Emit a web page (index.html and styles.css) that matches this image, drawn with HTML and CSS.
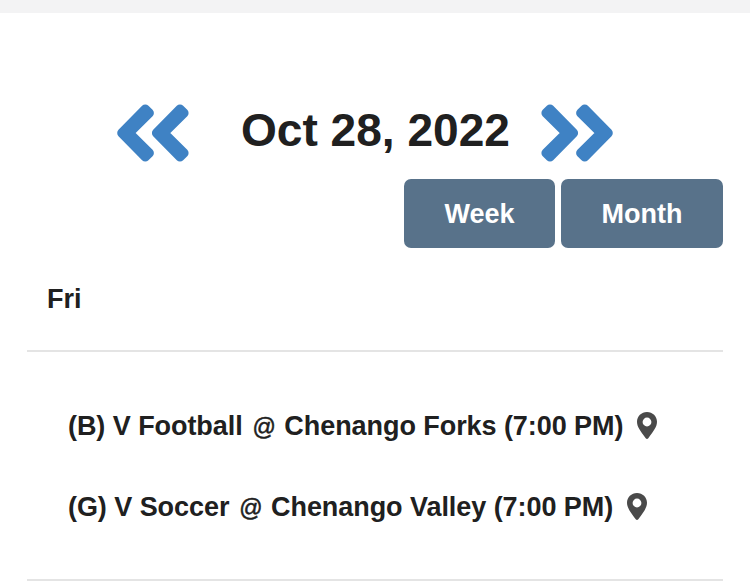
FILE: index.html
```html
<!DOCTYPE html>
<html lang="en">
<head>
<meta charset="utf-8">
<title>Schedule</title>
<link rel="stylesheet" href="styles.css">
</head>
<body>
<div class="topbar"></div>
<main class="calendar">
  <header class="heading">
    <svg class="chevrons" viewBox="0 0 72 58" aria-hidden="true"><path d="M4.700 29 28.300 5 32.400 9 12.200 29 32.400 49 28.300 53ZM39.400 29 63 5 67.100 9 46.900 29 67.100 49 63 53Z"/></svg>
    <h1 class="title"><svg class="line" width="269" height="56"><text x="0" y="43" textLength="269" lengthAdjust="spacingAndGlyphs">Oct 28, 2022</text></svg></h1>
    <svg class="chevrons" viewBox="0 0 72 58" aria-hidden="true"><path d="M32.600 29 9 5 4.900 9 25.100 29 4.900 49 9 53ZM67.300 29 43.700 5 39.600 9 59.800 29 39.600 49 43.700 53Z"/></svg>
  </header>
  <nav class="views">
    <button class="view week">Week</button>
    <button class="view month">Month</button>
  </nav>
  <h2 class="day">Fri</h2>
  <ul class="events">
    <li class="event"><span>(B) V Football <span class="at">@</span> Chenango Forks (7:00 PM)</span><svg class="pin" viewBox="0 0 20 27"><path fill-rule="evenodd" d="M10 0C4.400 0 0 4.300 0 9.800c0 5 3.300 9 8.700 16.500q1.300 1.400 2.600 0C16.700 18.800 20 14.800 20 9.800 20 4.300 15.600 0 10 0Zm0 5.600a4.400 4.400 0 1 1 0 8.800 4.400 4.400 0 0 1 0-8.800Z"/></svg></li>
    <li class="event"><span>(G) V Soccer <span class="at">@</span> Chenango Valley (7:00 PM)</span><svg class="pin" viewBox="0 0 20 27"><path fill-rule="evenodd" d="M10 0C4.400 0 0 4.300 0 9.800c0 5 3.300 9 8.700 16.500q1.300 1.400 2.600 0C16.700 18.800 20 14.800 20 9.800 20 4.300 15.600 0 10 0Zm0 5.600a4.400 4.400 0 1 1 0 8.800 4.400 4.400 0 0 1 0-8.800Z"/></svg></li>
  </ul>
</main>
</body>
</html>
```
FILE: styles.css
```css
* { box-sizing: border-box; }
body { margin: 0; background: #fff; color: #202020; font-family: "Liberation Sans", Arial, sans-serif; height: 585px; overflow: hidden; }
.topbar { height: 13px; background: #f3f3f4; }
.calendar { padding: 90px 27px 0; }
.heading { display: flex; height: 60px; padding-left: 90px; align-items: center; }
.chevrons { width: 72px; height: 58px; fill: #3f82c4; stroke: #3f82c4; stroke-width: 9; stroke-linejoin: round; }
.title { margin: 0 31px 0 52px; width: 269px; height: 60px; font-size: 46px; }
.line { display: block; overflow: visible; fill: #202020; }
.views { display: flex; justify-content: flex-end; gap: 6px; margin-top: 16px; }
.view { height: 69px; border: 0; border-radius: 7px; padding: 2px 0 0; background: #58728a; color: #fff; font: bold 27px "Liberation Sans", Arial, sans-serif; }
.week { width: 151px; }
.month { width: 162px; }
.day { margin: 0; height: 104px; padding: 36px 0 0 20px; border-bottom: 2px solid #e4e4e4; font-size: 27px; line-height: 30px; }
.events { list-style: none; margin: 0; padding: 34px 0 0 41px; height: 229px; border-bottom: 2px solid #e4e4e4; }
.event { display: flex; align-items: center; height: 81px; font-size: 27px; font-weight: bold; letter-spacing: -.06px; white-space: nowrap; }
.at { font-weight: normal; font-size: 23px; margin: 0 1px 0 2.5px; -webkit-text-stroke: .5px #202020; }
.pin { width: 20px; height: 27px; margin: 0 0 3px 14px; fill: #4a4a4a; }
```
